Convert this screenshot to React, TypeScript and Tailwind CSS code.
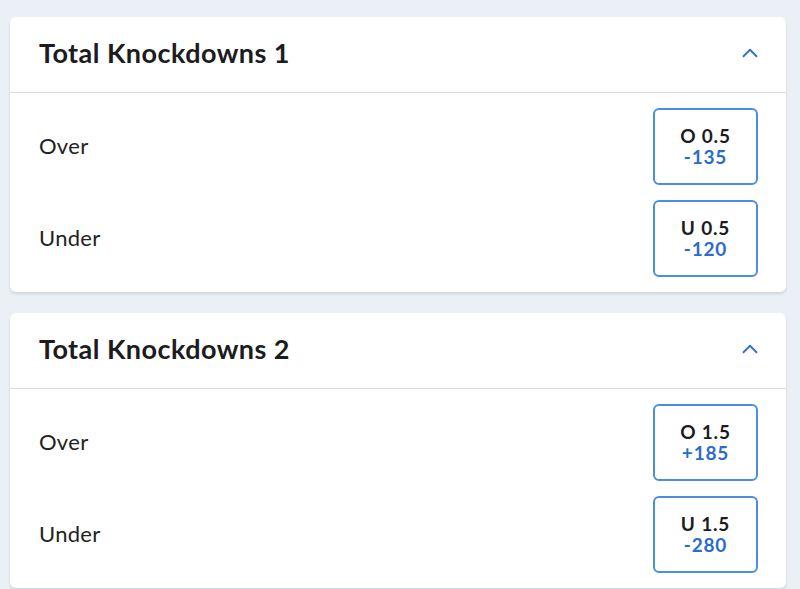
import { ChevronUp } from "lucide-react";

type Outcome = { label: string; line: string; odds: string };

const markets: { title: string; outcomes: Outcome[] }[] = [
  {
    title: "Total Knockdowns 1",
    outcomes: [
      { label: "Over", line: "O 0.5", odds: "-135" },
      { label: "Under", line: "U 0.5", odds: "-120" },
    ],
  },
  {
    title: "Total Knockdowns 2",
    outcomes: [
      { label: "Over", line: "O 1.5", odds: "+185" },
      { label: "Under", line: "U 1.5", odds: "-280" },
    ],
  },
];

function MarketCard({ title, outcomes }: { title: string; outcomes: Outcome[] }) {
  return (
    <div className="bg-white rounded-md shadow-[0_2px_3px_rgba(0,0,0,0.12)]">
      {/* header */}
      <div className="h-[76px] flex items-center justify-between pl-[29px] pr-[23px] border-b border-[#d9dde3]">
        <h2 className="text-[27px] font-bold text-[#1c1c1e] tracking-[0.45px] leading-none pb-1">{title}</h2>
        <ChevronUp className="w-[26px] h-[26px] text-[#2f6fd0] -mt-1" strokeWidth={1.7} />
      </div>

      {/* rows */}
      <div className="flex flex-col gap-[15px] py-[15px] pl-[29px] pr-[28px]">
        {outcomes.map((o) => (
          <div key={o.label} className="flex items-center justify-between">
            <span className="text-[22px] text-[#222] tracking-[0.3px] -mt-0.5">{o.label}</span>
            <button className="w-[105px] h-[77px] rounded-md border-2 border-[#4a8ee3] flex flex-col items-center justify-center gap-[1px]">
              <span className="text-[19px] leading-[20px] font-bold text-[#1c1c1e] tracking-[0.8px]">{o.line}</span>
              <span className="text-[19px] leading-[20px] font-bold text-[#2b6ccb] tracking-[0.8px]">{o.odds}</span>
            </button>
          </div>
        ))}
      </div>
    </div>
  );
}

export default function App() {
  return (
    <div
      className="min-h-screen bg-[#ebf0f6] pt-[17px] pl-[10px] pr-[14px] flex flex-col gap-[21px]"
      style={{ fontFamily: "Lato, 'Open Sans', sans-serif" }}
    >
      {markets.map((m) => (
        <MarketCard key={m.title} title={m.title} outcomes={m.outcomes} />
      ))}
    </div>
  );
}
